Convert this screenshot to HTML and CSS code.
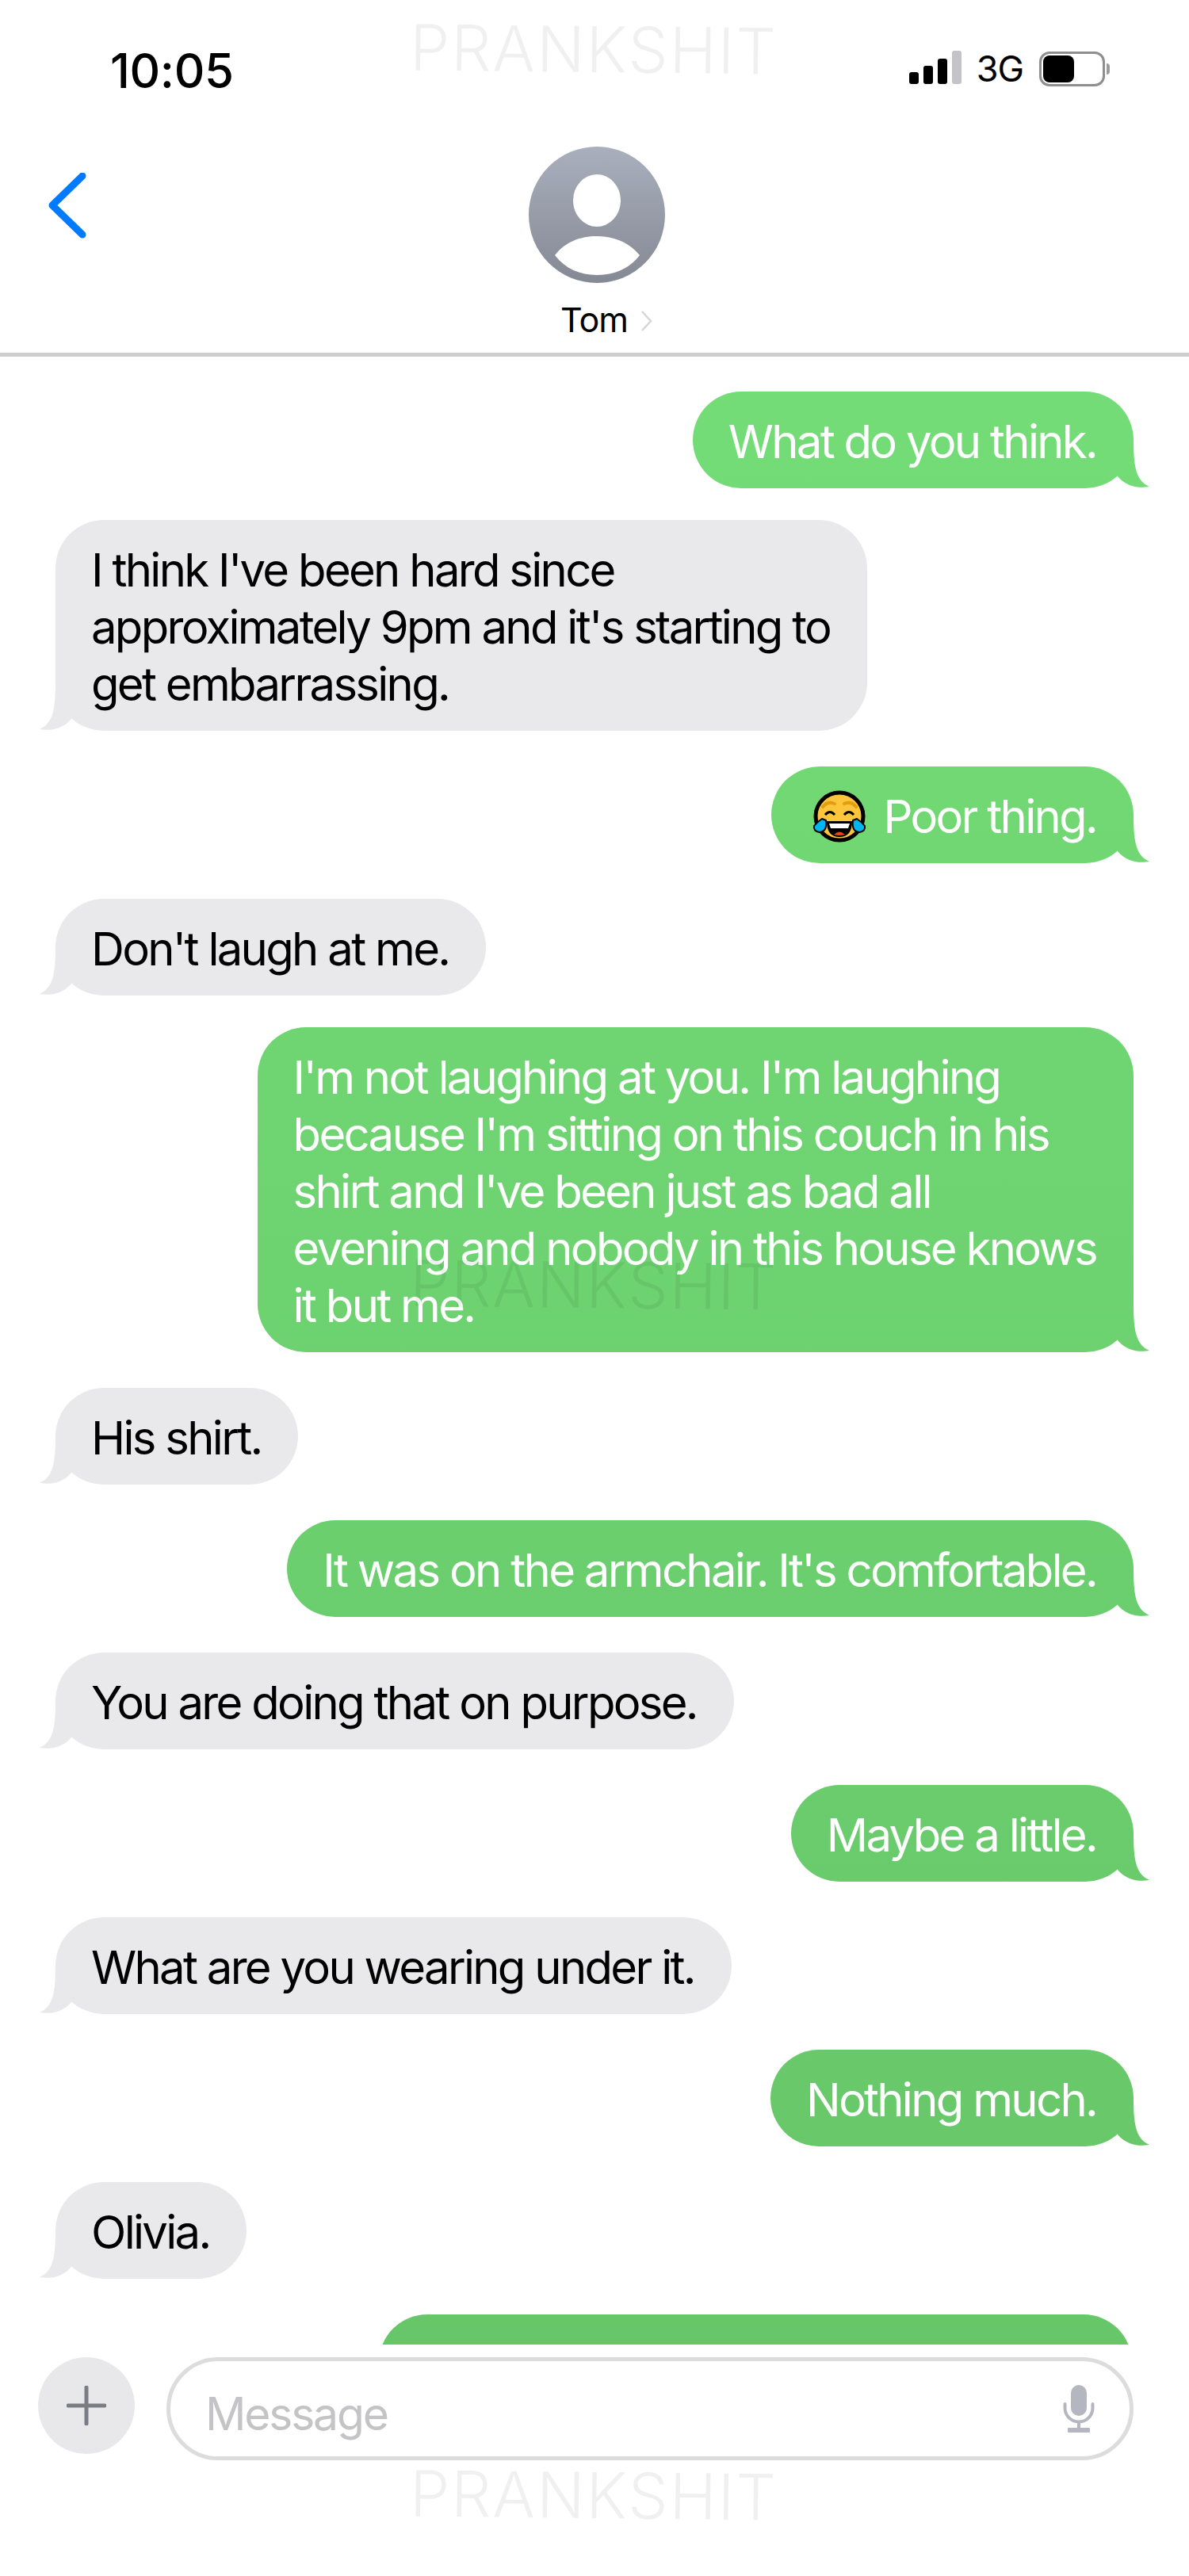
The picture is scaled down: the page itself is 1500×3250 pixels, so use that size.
FILE: index.html
```html
<!DOCTYPE html>
<html lang="en">
<head>
    <meta charset="UTF-8">
    <title>Tom</title>
    <link rel="stylesheet" href="styles.css">
</head>
<body>
<div class="phone">
    <div class="status">
        <span class="time">10:05</span>
        <div class="status-right">
            <div class="signal">
                <i class="bar b1"></i><i class="bar b2"></i><i class="bar b3"></i><i class="bar b4"></i>
            </div>
            <span class="net">3G</span>
            <div class="battery"><div class="charge"></div></div>
            <div class="nub"></div>
        </div>
    </div>

    <div class="nav">
        <svg class="back" width="50" height="84" viewBox="0 0 50 84">
            <path d="M44 4 L6 41 L44 78" fill="none" stroke="#007aff" stroke-width="9" stroke-linecap="round" stroke-linejoin="round"/>
        </svg>
        <div class="contact">
            <svg width="172" height="172" viewBox="0 0 172 172">
                <defs>
                    <linearGradient id="avatarFill" x1="0" y1="0" x2="0" y2="1">
                        <stop offset="0" stop-color="#aaafbd"/>
                        <stop offset="1" stop-color="#858994"/>
                    </linearGradient>
                </defs>
                <circle cx="86" cy="86" r="86" fill="url(#avatarFill)"/>
                <ellipse cx="86" cy="68" rx="30" ry="33" fill="#fff"/>
                <path d="M33 137 C46 120 65 113 86 113 C107 113 126 120 140 137 C127 154 108 162 86 162 C65 162 46 154 33 137 Z" fill="#fff"/>
            </svg>
            <div class="name">Tom
                <svg class="more" width="18" height="28" viewBox="0 0 18 28">
                    <path d="M3 2 L14 14 L3 26" fill="none" stroke="#d6d6d6" stroke-width="2.5"/>
                </svg>
            </div>
        </div>
    </div>

    <div class="thread">
        <div class="msg out tight">What do you think.</div>
        <div class="msg in">I think I've been hard since<br>approximately 9pm and it's starting to<br>get embarrassing.</div>
        <div class="msg out">
            <svg class="emoji" width="68" height="68" viewBox="0 0 68 68">
                <circle cx="34" cy="33" r="30" fill="#fdc63a" stroke="#000" stroke-width="5"/>
                <path d="M13 21 Q19 13 28 17" fill="none" stroke="#e09f12" stroke-width="4" stroke-linecap="round"/>
                <path d="M40 17 Q49 13 55 21" fill="none" stroke="#e09f12" stroke-width="4" stroke-linecap="round"/>
                <path d="M16 31 Q22 24 28 31" fill="none" stroke="#000" stroke-width="3"/>
                <path d="M40 31 Q46 24 52 31" fill="none" stroke="#000" stroke-width="3"/>
                <path d="M18 39 H50 Q50 59 34 59 Q18 59 18 39 Z" fill="#000"/>
                <path d="M21 42 H47 L45 48 H23 Z" fill="#fff"/>
                <path d="M27 56 Q34 49 41 56 Q34 58 27 56 Z" fill="#f0421c"/>
                <path d="M12 36 L17 38 Q19 52 9 53 Q1 52 2 45 Q6 40 12 36 Z" fill="#00b6f2" stroke="#000" stroke-width="2"/>
                <path d="M56 36 L51 38 Q49 52 59 53 Q67 52 66 45 Q62 40 56 36 Z" fill="#00b6f2" stroke="#000" stroke-width="2"/>
            </svg>
            Poor thing.
        </div>
        <div class="msg in tight">Don't laugh at me.</div>
        <div class="msg out">I'm not laughing at you. I'm laughing<br>because I'm sitting on this couch in his<br>shirt and I've been just as bad all<br>evening and nobody in this house knows<br>it but me.</div>
        <div class="msg in">His shirt.</div>
        <div class="msg out">It was on the armchair. It's comfortable.</div>
        <div class="msg in">You are doing that on purpose.</div>
        <div class="msg out">Maybe a little.</div>
        <div class="msg in">What are you wearing under it.</div>
        <div class="msg out">Nothing much.</div>
        <div class="msg in">Olivia.</div>
        <div class="msg out last">&nbsp;<br>&nbsp;</div>
    </div>

    <div class="compose">
        <div class="plus">
            <svg width="50" height="50" viewBox="0 0 50 50">
                <path d="M25 2 V48 M2 25 H48" stroke="#7b7c84" stroke-width="5" stroke-linecap="round"/>
            </svg>
        </div>
        <div class="field">
            <span class="placeholder">Message</span>
            <svg width="40" height="60" viewBox="0 0 40 60">
                <rect x="10" y="0" width="20" height="39" rx="10" fill="#b4b7bf"/>
                <path d="M2.5 24 V29 A17.5 17.5 0 0 0 37.5 29 V24" fill="none" stroke="#b4b7bf" stroke-width="4" stroke-linecap="round"/>
                <path d="M20 46 V55" stroke="#b4b7bf" stroke-width="4"/>
                <rect x="6" y="54" width="28" height="6" rx="1" fill="#b4b7bf"/>
            </svg>
        </div>
    </div>

    <div class="mark mark-top">PRANKSHIT</div>
    <div class="mark mark-mid">PRANKSHIT</div>
    <div class="mark mark-bottom">PRANKSHIT</div>
</div>
</body>
</html>
```

FILE: styles.css
```css
* {
    box-sizing: border-box;
}
body {
    margin: 0;
    background: #fff;
    font-family: Inter, "Liberation Sans", sans-serif;
    color: #000;
}
.phone {
    position: relative;
    width: 1500px;
    height: 3250px;
    overflow: hidden;
    display: flex;
    flex-direction: column;
}

/* status bar */
.status {
    height: 170px;
    padding: 59px 100px 0 139px;
    display: flex;
    justify-content: space-between;
    align-items: flex-start;
}
.time {
    font-size: 60px;
    line-height: 60px;
    font-weight: 500;
    letter-spacing: -0.4px;
}
.status-right {
    height: 49px;
    display: flex;
    align-items: flex-end;
}
.signal {
    display: flex;
    align-items: flex-end;
    gap: 6px;
    height: 42px;
    margin-bottom: 2px;
}
.bar {
    width: 12px;
    border-radius: 3px;
    background: #000;
}
.b1 { height: 15px; }
.b2 { height: 23px; }
.b3 { height: 32px; }
.b4 { height: 42px; background: #c4c4c8; }
.net {
    margin: 0 20px -4px 19px;
    font-size: 45px;
    line-height: 50px;
    letter-spacing: -1px;
}
.battery {
    width: 83px;
    height: 44px;
    margin-bottom: -1px;
    padding: 2px;
    border: 3px solid #8e8e8e;
    border-radius: 13px;
}
.charge {
    width: 39px;
    height: 34px;
    background: #000;
    border-radius: 8px;
}
.nub {
    width: 4px;
    height: 14px;
    margin: 0 0 14px 2px;
    background: #9a9a9a;
    border-radius: 0 7px 7px 0;
}

/* contact header */
.nav {
    height: 280px;
    padding-top: 15px;
    border-bottom: 5px solid #cdcdcd;
    display: grid;
    grid-template-columns: 1fr auto 1fr;
}
.back {
    margin: 33px 0 0 60px;
}
.contact {
    padding-left: 6px;
    display: flex;
    flex-direction: column;
    align-items: center;
}
.name {
    margin: 16px 0 0 26px;
    font-size: 43px;
    line-height: 60px;
    letter-spacing: -1px;
}
.more {
    margin-left: 4px;
}

/* messages */
.thread {
    flex: 1;
    min-height: 0;
    padding: 44px 70px 0;
    display: flex;
    flex-direction: column;
    align-items: flex-start;
    gap: 45px;
    overflow: hidden;
}
.msg {
    position: relative;
    flex: none;
    padding: 27px 47px 23px 45px;
    border-radius: 61px;
    font-size: 58px;
    line-height: 72px;
    letter-spacing: -2.7px;
    white-space: nowrap;
}
.msg.tight {
    margin-bottom: -5px;
}
.msg::after {
    content: "";
    position: absolute;
    bottom: 0;
    width: 50px;
    height: 70px;
    background: inherit;
}
.out {
    align-self: flex-end;
    color: #fff;
    background: linear-gradient(#76e179, #65c367) fixed;
}
.out::after {
    right: -22px;
    clip-path: path("M28 7 C28 40 30 60 48 68 C36 70 20 69 8 55 L0 14 Z");
}
.in {
    background: #e9e9eb;
}
.in::after {
    left: -22px;
    clip-path: path("M22 7 C22 40 20 60 2 68 C14 70 30 69 42 55 L50 14 Z");
}
.last {
    width: 950px;
    margin-right: 2px;
}
.emoji {
    vertical-align: -14px;
    margin: 0 8px 0 7px;
}

/* input row */
.compose {
    flex: none;
    height: 292px;
    padding: 16px 70px 0 48px;
    display: flex;
    align-items: flex-start;
    gap: 40px;
}
.plus {
    width: 122px;
    height: 122px;
    flex: none;
    border-radius: 50%;
    background: #e8e8ea;
    display: flex;
    align-items: center;
    justify-content: center;
}
.field {
    flex: 1;
    height: 130px;
    padding: 0 44px 0 44px;
    border: 5px solid #dcdcdc;
    border-radius: 65px;
    display: flex;
    align-items: center;
    justify-content: space-between;
}
.placeholder {
    margin-top: 12px;
    font-size: 57px;
    letter-spacing: -2.2px;
    color: #c4c4c6;
}

/* stamped overlay text */
.mark {
    position: absolute;
    left: 517px;
    font-size: 80px;
    line-height: 80px;
    font-weight: 300;
    letter-spacing: 1.7px;
    color: rgba(0, 0, 0, 0.06);
    transform: rotate(0.6deg);
}
.mark-top { top: 22px; }
.mark-mid { top: 1581px; }
.mark-bottom { top: 3108px; }
```
